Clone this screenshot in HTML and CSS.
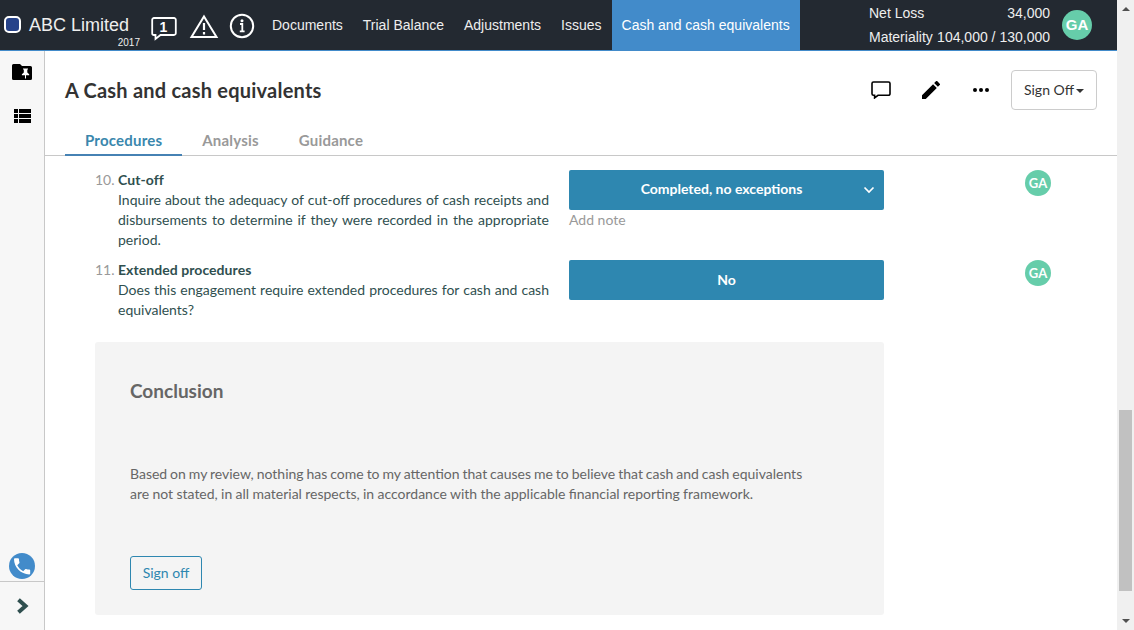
FILE: index.html
```html
<!DOCTYPE html>
<html lang="en">
<head>
<meta charset="utf-8">
<title>ABC Limited</title>
<link rel="stylesheet" href="styles.css">
</head>
<body>
<div class="app">
  <header class="topbar">
    <div class="brand">
      <span class="brand-mark"></span>
      <div class="brand-text"><span class="brand-name">ABC Limited</span><span class="brand-year">2017</span></div>
    </div>
    <div class="alerts">
      <svg class="alert-comment" width="26" height="24" viewBox="0 0 26 24"><path d="M3 1h20a1.800 1.800 0 0 1 1.800 1.800v13.400a1.800 1.800 0 0 1-1.800 1.800H9.500L4.500 22v-4H3a1.800 1.800 0 0 1-1.800-1.800V2.800A1.800 1.800 0 0 1 3 1z" fill="none" stroke="#fff" stroke-width="1.800"/><text x="12.500" y="14.500" class="alert-count">1</text></svg>
      <svg class="alert-warning" width="30" height="25" viewBox="0 0 30 25"><path d="M15 2.500L27.500 23h-25z" fill="none" stroke="#fff" stroke-width="2"/><path d="M15 9v7M15 18v2.500" stroke="#fff" stroke-width="2.200"/></svg>
      <svg class="alert-info" width="26" height="26" viewBox="0 0 26 26"><circle cx="13" cy="13" r="11.200" fill="none" stroke="#fff" stroke-width="2"/><path d="M11 11H13.300V18M10.800 18.300h4.800" fill="none" stroke="#fff" stroke-width="1.800"/><circle cx="13" cy="7.700" r="1.500" fill="#fff"/></svg>
    </div>
    <nav class="nav">
      <a>Documents</a><a>Trial Balance</a><a>Adjustments</a><a>Issues</a><a class="nav-active">Cash and cash equivalents</a>
    </nav>
    <div class="totals">
      <div class="total"><span>Net Loss</span><span>34,000</span></div>
      <div class="total"><span>Materiality</span><span>104,000 / 130,000</span></div>
    </div>
    <span class="avatar avatar-user">GA</span>
  </header>
  <div class="body">
    <aside class="sidebar">
      <div class="side-icons">
        <svg width="20" height="16" viewBox="0 0 20 16"><path d="M1.500 0H8l2 2h8.500A1.500 1.500 0 0 1 20 3.500v11a1.500 1.500 0 0 1-1.500 1.500h-17A1.500 1.500 0 0 1 0 14.500v-13A1.500 1.500 0 0 1 1.500 0z" fill="#000"/><path d="M11 4.500h5v1h-.7v3l1.900 1.700v1H14V14.500h-1v-3.300H9.900v-1l1.900-1.700v-3H11z" fill="#fff"/></svg>
        <svg width="17" height="14" viewBox="0 0 17 14"><path d="M0 0h4v4H0zM5 0h12v4H5zM0 5h4v4H0zM5 5h12v4H5zM0 10h4v4H0zM5 10h12v4H5z" fill="#000"/></svg>
      </div>
      <div class="side-phone">
        <svg width="26" height="26" viewBox="0 0 26 26"><circle cx="13" cy="13" r="13" fill="#428bca"/><path transform="translate(2.300 2.500) scale(.9)" d="M6.620 10.790c1.440 2.830 3.760 5.140 6.590 6.590l2.200-2.200c.270-.270.670-.360 1.020-.240 1.120.370 2.330.570 3.570.570.550 0 1 .450 1 1V20c0 .550-.450 1-1 1-9.390 0-17-7.610-17-17 0-.550.450-1 1-1h3.500c.550 0 1 .450 1 1 0 1.250.200 2.450.570 3.570.110.350.030.740-.250 1.020l-2.200 2.200z" fill="#fff"/></svg>
      </div>
      <div class="side-expand">
        <svg width="12" height="16" viewBox="0 0 12 16"><path d="M1.500 1.800L8.500 8l-7 6.200" fill="none" stroke="#2f4f4f" stroke-width="4"/></svg>
      </div>
    </aside>
    <main class="main">
      <div class="title-row">
        <h1 class="title">A Cash and cash equivalents</h1>
        <div class="actions">
          <svg width="20" height="18" viewBox="0 0 20 18"><path d="M2.500 1h15A1.500 1.500 0 0 1 19 2.500v10.300a1.500 1.500 0 0 1-1.500 1.500H7L3.600 16.900v-2.600H2.500A1.500 1.500 0 0 1 1 12.800V2.500A1.500 1.500 0 0 1 2.500 1z" fill="none" stroke="#000" stroke-width="1.600"/></svg>
          <svg width="18" height="18" viewBox="3 3 18 18"><path d="M3 17.250V21h3.750L17.810 9.940l-3.750-3.750L3 17.250zM20.710 7.040a1 1 0 0 0 0-1.410l-2.340-2.340a1 1 0 0 0-1.410 0l-1.830 1.830 3.750 3.750 1.830-1.830z" fill="#000"/></svg>
          <svg width="16" height="4" viewBox="0 0 16 4"><circle cx="2" cy="2" r="2"/><circle cx="8" cy="2" r="2"/><circle cx="14" cy="2" r="2"/></svg>
          <button class="menu-button">Sign Off<span class="caret"></span></button>
        </div>
      </div>
      <div class="tabs"><a class="tab tab-active">Procedures</a><a class="tab">Analysis</a><a class="tab">Guidance</a></div>
      <section class="procedures">
        <article class="procedure">
          <span class="number">10.</span>
          <div class="description"><h2>Cut-off</h2><p>Inquire about the adequacy of cut-off procedures of cash receipts and disbursements to determine if they were recorded in the appropriate period.</p></div>
          <div class="response"><button class="answer answer-select"><span>Completed, no exceptions</span><svg width="12" height="8" viewBox="0 0 12 8"><path d="M1.500 1.500L6 6l4.500-4.500" fill="none" stroke="#fff" stroke-width="1.700"/></svg></button><span class="note">Add note</span></div>
          <span class="avatar avatar-small">GA</span>
        </article>
        <article class="procedure">
          <span class="number">11.</span>
          <div class="description"><h2>Extended procedures</h2><p>Does this engagement require extended procedures for cash and cash equivalents?</p></div>
          <div class="response"><button class="answer"><span>No</span></button></div>
          <span class="avatar avatar-small">GA</span>
        </article>
      </section>
      <section class="conclusion">
        <h2 class="conclusion-title">Conclusion</h2>
        <p class="conclusion-text">Based on my review, nothing has come to my attention that causes me to believe that cash and cash equivalents <span class="conclusion-end">are not stated, in all material respects, in accordance with the applicable financial reporting framework.</span></p>
        <button class="signoff">Sign off</button>
      </section>
    </main>
  </div>
</div>
<div class="scrollbar"><span class="arrow-up"></span><span class="thumb"></span><span class="arrow-down"></span></div>
</body>
</html>
```
FILE: styles.css
```css
* { box-sizing: border-box; }
body { margin: 0; width: 1134px; height: 630px; display: flex; overflow: hidden; background: #fff; font-family: Lato, sans-serif; font-size: 14px; line-height: 20px; color: #2f4f4f; }
h1, h2, p { margin: 0; }
svg { display: block; flex: none; }
button { font: inherit; }
.app { width: 1117px; display: flex; flex-direction: column; }

.topbar { height: 51px; flex: none; display: flex; background: #232931; border-bottom: 1px solid #428bca; color: #eee; font-family: "Liberation Sans", Arial, sans-serif; }
.brand { width: 151px; display: flex; padding: 16px 0 0 4px; }
.brand-mark { width: 17px; height: 17px; border: 2px solid #fff; border-radius: 5px; background: #27438a; margin-right: 8px; }
.brand-text { width: 111px; display: flex; flex-direction: column; }
.brand-name { font-size: 18px; line-height: 18px; white-space: nowrap; }
.brand-year { font-size: 10px; line-height: 12px; align-self: flex-end; margin-top: 3px; }
.alerts { width: 111px; display: flex; align-items: flex-start; }
.alert-comment { margin-top: 17px; }
.alert-warning { margin: 14px 0 0 12px; }
.alert-info { margin: 13px 0 0 10px; }
.alert-count { font: bold 14px "Liberation Sans", sans-serif; fill: #fff; text-anchor: middle; }
.nav { width: 538px; display: flex; }
.nav a { padding: 0 10px; line-height: 50px; white-space: nowrap; }
.nav .nav-active { background: #428bca; color: #fff; }
.totals { width: 181px; margin-left: 69px; padding-top: 1px; }
.total { display: flex; justify-content: space-between; line-height: 24px; }
.avatar { display: flex; align-items: center; justify-content: center; border-radius: 50%; background: #66cdaa; color: #fff; font-weight: bold; }
.avatar-user { width: 30px; height: 30px; margin: 10px 0 0 12px; font-size: 15px; }

.body { flex: 1; display: flex; min-height: 0; }
.sidebar { width: 45px; flex: none; display: flex; flex-direction: column; background: #f7f7f7; border-right: 1px solid #c8c8c8; }
.side-icons { flex: 1; display: flex; flex-direction: column; gap: 29px; padding: 13px 0 0 12px; }
.side-icons svg + svg { margin-left: 2px; }
.side-phone { padding: 0 0 2px 9px; }
.side-expand { height: 49px; border-top: 1px solid #c8c8c8; padding: 16px 0 0 17px; }

.main { flex: 1; min-width: 0; }
.title-row { height: 78px; display: flex; justify-content: space-between; align-items: center; padding: 0 20px; }
.title { font-size: 20px; line-height: 28px; letter-spacing: .22px; color: #333; }
.actions { display: flex; align-items: center; color: #333; }
.actions svg:nth-child(1) { margin-right: 31px; }
.actions svg:nth-child(2) { margin-right: 33px; }
.actions svg:nth-child(3) { margin-right: 22px; }
.menu-button { width: 86px; height: 40px; display: flex; align-items: center; justify-content: center; gap: 2px; padding: 0; background: #fff; border: 1px solid #ccc; border-radius: 4px; color: #333; }
.caret { margin-top: 1px; border: 4px solid transparent; border-top-color: #333; border-bottom: 0; }
.tabs { height: 27px; display: flex; border-bottom: 1px solid #c8c8c8; padding-left: 20px; font-size: 15px; font-weight: bold; letter-spacing: .2px; color: #999; }
.tab { height: 27px; padding: 1px 20px 0; }
.tab-active { border-bottom: 2px solid #4682b4; color: #3a87ad; }

.procedures { padding: 14px 0 0 50px; }
.procedure { display: flex; align-items: flex-start; margin-bottom: 10px; }
.number { width: 23px; color: #999; }
.description { width: 431px; text-align: justify; margin-right: 20px; }
.description h2 { font-size: 14px; line-height: 20px; letter-spacing: .06px; }
.response { width: 315px; margin-right: 141px; }
.answer { position: relative; display: flex; justify-content: center; align-items: center; width: 315px; height: 40px; padding: 0; border: 0; border-radius: 2px; background: #2e87b0; color: #fff; font-weight: bold; }
.answer-select { padding-right: 10px; padding-bottom: 2px; }
.answer svg { position: absolute; right: 9px; top: 16px; }
.note { display: block; color: #999; }
.avatar-small { width: 26px; height: 26px; font-size: 13px; }

.conclusion { width: 789px; height: 273px; margin: 22px 0 0 50px; padding: 35px; background: #f4f4f4; border-radius: 3px; color: #666; }
.conclusion-title { font-size: 19px; line-height: 28px; }
.conclusion-text { margin-top: 59px; line-height: 20px; width: 690px; word-spacing: -.65px; }
.conclusion-end { display: block; word-spacing: -.27px; }
.signoff { width: 72px; height: 34px; margin-top: 52px; padding: 0; border: 1px solid #2e87b0; border-radius: 3px; background: transparent; color: #2e87b0; }

.scrollbar { width: 17px; display: flex; flex-direction: column; align-items: center; background: #f0f0f0; }
.arrow-up { margin-top: 7px; border: 4px solid transparent; border-bottom-color: #505050; border-top: 0; }
.thumb { width: 13px; height: 181px; margin-top: 399px; background: #c1c1c1; }
.arrow-down { margin-top: 28px; border: 4px solid transparent; border-top-color: #505050; border-bottom: 0; }
```
